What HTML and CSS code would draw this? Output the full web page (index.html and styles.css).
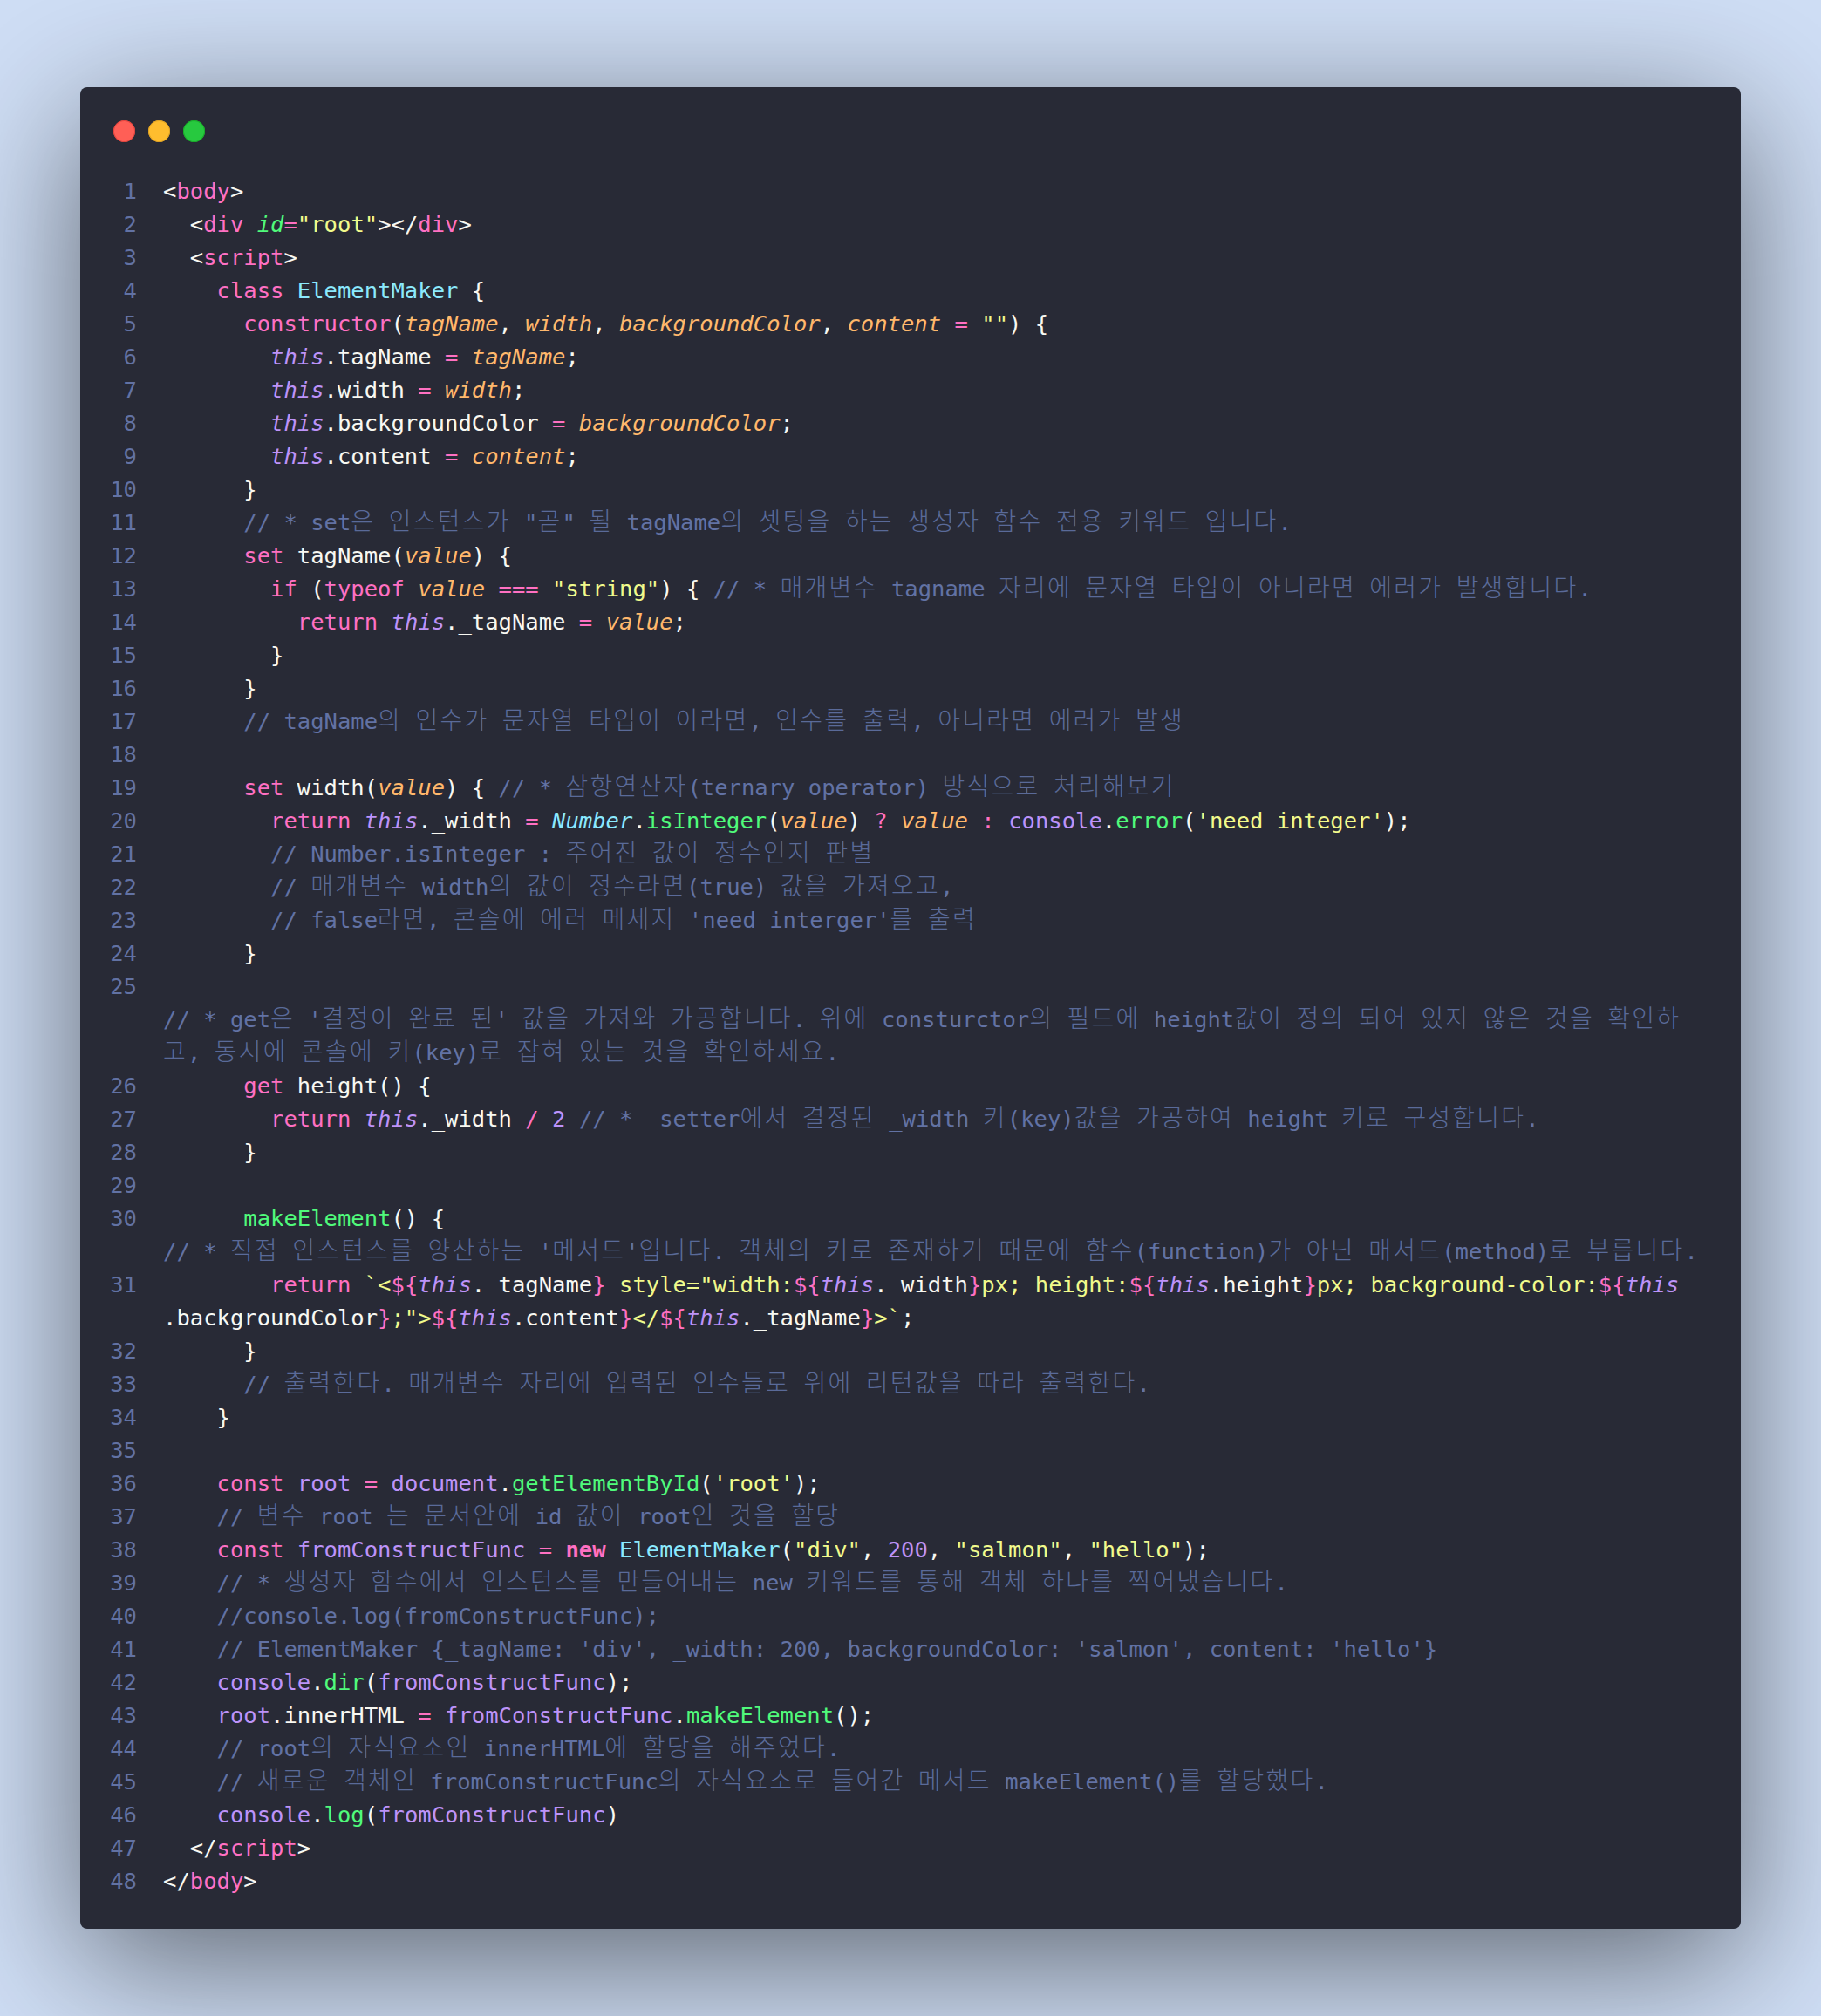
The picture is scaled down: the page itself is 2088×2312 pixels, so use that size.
FILE: index.html
```html
<!DOCTYPE html>
<html lang="ko">
<head>
<meta charset="utf-8">
<title>ElementMaker</title>
<link rel="stylesheet" href="styles.css">
</head>
<body>
<main class="window">
<div class="dots"><span class="dot red"></span><span class="dot yellow"></span><span class="dot green"></span></div>
<div class="lines">
<div class="ln"><span class="no">1</span><code class="code">&lt;<b class="k">body</b>&gt;</code></div>
<div class="ln"><span class="no">2</span><code class="code">  &lt;<b class="k">div</b> <i class="f">id</i><b class="k">=</b><b class="s">"root"</b>&gt;&lt;/<b class="k">div</b>&gt;</code></div>
<div class="ln"><span class="no">3</span><code class="code">  &lt;<b class="k">script</b>&gt;</code></div>
<div class="ln"><span class="no">4</span><code class="code">    <b class="k">class</b> <b class="t">ElementMaker</b> {</code></div>
<div class="ln"><span class="no">5</span><code class="code">      <b class="k">constructor</b>(<i class="v">tagName</i>, <i class="v">width</i>, <i class="v">backgroundColor</i>, <i class="v">content</i> <b class="k">=</b> <b class="s">""</b>) {</code></div>
<div class="ln"><span class="no">6</span><code class="code">        <i class="p">this</i>.tagName <b class="k">=</b> <i class="v">tagName</i>;</code></div>
<div class="ln"><span class="no">7</span><code class="code">        <i class="p">this</i>.width <b class="k">=</b> <i class="v">width</i>;</code></div>
<div class="ln"><span class="no">8</span><code class="code">        <i class="p">this</i>.backgroundColor <b class="k">=</b> <i class="v">backgroundColor</i>;</code></div>
<div class="ln"><span class="no">9</span><code class="code">        <i class="p">this</i>.content <b class="k">=</b> <i class="v">content</i>;</code></div>
<div class="ln"><span class="no">10</span><code class="code">      }</code></div>
<div class="ln"><span class="no">11</span><code class="code">      <b class="c">// * set<u>은</u> <u>인스턴스가</u> "<u>곧</u>" <u>될</u> tagName<u>의</u> <u>셋팅을</u> <u>하는</u> <u>생성자</u> <u>함수</u> <u>전용</u> <u>키워드</u> <u>입니다</u>.</b></code></div>
<div class="ln"><span class="no">12</span><code class="code">      <b class="k">set</b> tagName(<i class="v">value</i>) {</code></div>
<div class="ln"><span class="no">13</span><code class="code">        <b class="k">if</b> (<b class="k">typeof</b> <i class="v">value</i> <b class="k">===</b> <b class="s">"string"</b>) { <b class="c">// * <u>매개변수</u> tagname <u>자리에</u> <u>문자열</u> <u>타입이</u> <u>아니라면</u> <u>에러가</u> <u>발생합니다</u>.</b></code></div>
<div class="ln"><span class="no">14</span><code class="code">          <b class="k">return</b> <i class="p">this</i>._tagName <b class="k">=</b> <i class="v">value</i>;</code></div>
<div class="ln"><span class="no">15</span><code class="code">        }</code></div>
<div class="ln"><span class="no">16</span><code class="code">      }</code></div>
<div class="ln"><span class="no">17</span><code class="code">      <b class="c">// tagName<u>의</u> <u>인수가</u> <u>문자열</u> <u>타입이</u> <u>이라면</u>, <u>인수를</u> <u>출력</u>, <u>아니라면</u> <u>에러가</u> <u>발생</u></b></code></div>
<div class="ln"><span class="no">18</span><code class="code"> </code></div>
<div class="ln"><span class="no">19</span><code class="code">      <b class="k">set</b> width(<i class="v">value</i>) { <b class="c">// * <u>삼항연산자</u>(ternary operator) <u>방식으로</u> <u>처리해보기</u></b></code></div>
<div class="ln"><span class="no">20</span><code class="code">        <b class="k">return</b> <i class="p">this</i>._width <b class="k">=</b> <i class="t">Number</i>.<b class="f">isInteger</b>(<i class="v">value</i>) <b class="k">?</b> <i class="v">value</i> <b class="k">:</b> <b class="p">console</b>.<b class="f">error</b>(<b class="s">'need integer'</b>);</code></div>
<div class="ln"><span class="no">21</span><code class="code">        <b class="c">// Number.isInteger : <u>주어진</u> <u>값이</u> <u>정수인지</u> <u>판별</u></b></code></div>
<div class="ln"><span class="no">22</span><code class="code">        <b class="c">// <u>매개변수</u> width<u>의</u> <u>값이</u> <u>정수라면</u>(true) <u>값을</u> <u>가져오고</u>,</b></code></div>
<div class="ln"><span class="no">23</span><code class="code">        <b class="c">// false<u>라면</u>, <u>콘솔에</u> <u>에러</u> <u>메세지</u> 'need interger'<u>를</u> <u>출력</u></b></code></div>
<div class="ln"><span class="no">24</span><code class="code">      }</code></div>
<div class="ln"><span class="no">25</span><code class="code"> <br><b class="c">// * get<u>은</u> '<u>결정이</u> <u>완료</u> <u>된</u>' <u>값을</u> <u>가져와</u> <u>가공합니다</u>. <u>위에</u> consturctor<u>의</u> <u>필드에</u> height<u>값이</u> <u>정의</u> <u>되어</u> <u>있지</u> <u>않은</u> <u>것을</u> <u>확인하</u><br><u>고</u>, <u>동시에</u> <u>콘솔에</u> <u>키</u>(key)<u>로</u> <u>잡혀</u> <u>있는</u> <u>것을</u> <u>확인하세요</u>.</b></code></div>
<div class="ln"><span class="no">26</span><code class="code">      <b class="k">get</b> height() {</code></div>
<div class="ln"><span class="no">27</span><code class="code">        <b class="k">return</b> <i class="p">this</i>._width <b class="k">/</b> <b class="p">2</b> <b class="c">// *  setter<u>에서</u> <u>결정된</u> _width <u>키</u>(key)<u>값을</u> <u>가공하여</u> height <u>키로</u> <u>구성합니다</u>.</b></code></div>
<div class="ln"><span class="no">28</span><code class="code">      }</code></div>
<div class="ln"><span class="no">29</span><code class="code"> </code></div>
<div class="ln"><span class="no">30</span><code class="code">      <b class="f">makeElement</b>() {<br><b class="c">// * <u>직접</u> <u>인스턴스를</u> <u>양산하는</u> '<u>메서드</u>'<u>입니다</u>. <u>객체의</u> <u>키로</u> <u>존재하기</u> <u>때문에</u> <u>함수</u>(function)<u>가</u> <u>아닌</u> <u>매서드</u>(method)<u>로</u> <u>부릅니다</u>.</b></code></div>
<div class="ln"><span class="no">31</span><code class="code">        <b class="k">return</b> <b class="s">`&lt;</b><b class="k">${</b><i class="p">this</i>._tagName<b class="k">}</b><b class="s"> style="width:</b><b class="k">${</b><i class="p">this</i>._width<b class="k">}</b><b class="s">px; height:</b><b class="k">${</b><i class="p">this</i>.height<b class="k">}</b><b class="s">px; background-color:</b><b class="k">${</b><i class="p">this</i><br>.backgroundColor<b class="k">}</b><b class="s">;"&gt;</b><b class="k">${</b><i class="p">this</i>.content<b class="k">}</b><b class="s">&lt;/</b><b class="k">${</b><i class="p">this</i>._tagName<b class="k">}</b><b class="s">&gt;`</b>;</code></div>
<div class="ln"><span class="no">32</span><code class="code">      }</code></div>
<div class="ln"><span class="no">33</span><code class="code">      <b class="c">// <u>출력한다</u>. <u>매개변수</u> <u>자리에</u> <u>입력된</u> <u>인수들로</u> <u>위에</u> <u>리턴값을</u> <u>따라</u> <u>출력한다</u>.</b></code></div>
<div class="ln"><span class="no">34</span><code class="code">    }</code></div>
<div class="ln"><span class="no">35</span><code class="code"> </code></div>
<div class="ln"><span class="no">36</span><code class="code">    <b class="k">const</b> <b class="p">root</b> <b class="k">=</b> <b class="p">document</b>.<b class="f">getElementById</b>(<b class="s">'root'</b>);</code></div>
<div class="ln"><span class="no">37</span><code class="code">    <b class="c">// <u>변수</u> root <u>는</u> <u>문서안에</u> id <u>값이</u> root<u>인</u> <u>것을</u> <u>할당</u></b></code></div>
<div class="ln"><span class="no">38</span><code class="code">    <b class="k">const</b> <b class="p">fromConstructFunc</b> <b class="k">=</b> <strong class="k">new</strong> <b class="t">ElementMaker</b>(<b class="s">"div"</b>, <b class="p">200</b>, <b class="s">"salmon"</b>, <b class="s">"hello"</b>);</code></div>
<div class="ln"><span class="no">39</span><code class="code">    <b class="c">// * <u>생성자</u> <u>함수에서</u> <u>인스턴스를</u> <u>만들어내는</u> new <u>키워드를</u> <u>통해</u> <u>객체</u> <u>하나를</u> <u>찍어냈습니다</u>.</b></code></div>
<div class="ln"><span class="no">40</span><code class="code">    <b class="c">//console.log(fromConstructFunc);</b></code></div>
<div class="ln"><span class="no">41</span><code class="code">    <b class="c">// ElementMaker {_tagName: 'div', _width: 200, backgroundColor: 'salmon', content: 'hello'}</b></code></div>
<div class="ln"><span class="no">42</span><code class="code">    <b class="p">console</b>.<b class="f">dir</b>(<b class="p">fromConstructFunc</b>);</code></div>
<div class="ln"><span class="no">43</span><code class="code">    <b class="p">root</b>.innerHTML <b class="k">=</b> <b class="p">fromConstructFunc</b>.<b class="f">makeElement</b>();</code></div>
<div class="ln"><span class="no">44</span><code class="code">    <b class="c">// root<u>의</u> <u>자식요소인</u> innerHTML<u>에</u> <u>할당을</u> <u>해주었다</u>.</b></code></div>
<div class="ln"><span class="no">45</span><code class="code">    <b class="c">// <u>새로운</u> <u>객체인</u> fromConstructFunc<u>의</u> <u>자식요소로</u> <u>들어간</u> <u>메서드</u> makeElement()<u>를</u> <u>할당했다</u>.</b></code></div>
<div class="ln"><span class="no">46</span><code class="code">    <b class="p">console</b>.<b class="f">log</b>(<b class="p">fromConstructFunc</b>)</code></div>
<div class="ln"><span class="no">47</span><code class="code">  &lt;/<b class="k">script</b>&gt;</code></div>
<div class="ln"><span class="no">48</span><code class="code">&lt;/<b class="k">body</b>&gt;</code></div>
</div>
</main>
</body>
</html>
```
FILE: styles.css
```css
html, body { margin: 0; padding: 0; }
body {
  width: 2088px;
  height: 2312px;
  box-sizing: border-box;
  padding: 100px 92px;
  background: #cfdef5;
  overflow: hidden;
}
.window {
  height: 2112px;
  box-sizing: border-box;
  padding: 38px 0 0 38px;
  background: #282a36;
  border-radius: 8px;
  box-shadow: 0 38px 160px rgba(0, 0, 0, 0.55);
}
.dots { display: flex; gap: 15px; height: 25px; margin-bottom: 37px; }
.dot { width: 25px; height: 25px; border-radius: 50%; }
.red { background: #ff5f56; box-shadow: inset 0 0 0 1px #e0443e; }
.yellow { background: #ffbd2e; box-shadow: inset 0 0 0 1px #dea123; }
.green { background: #27c93f; box-shadow: inset 0 0 0 1px #1aab29; }
.lines { margin-left: -38px; }
.ln {
  display: flex;
  gap: 30px;
  font: 25.55px/38px "DejaVu Sans Mono", "Noto Sans CJK KR", monospace;
  color: #f8f8f2;
}
.no { width: 65px; text-align: right; color: #6272a4; flex: none; }
.code { font: inherit; white-space: pre; }
b, strong, i { font-weight: 400; }
i { font-style: italic; }
strong { font-weight: 700; }
u {
  font-family: "Noto Sans CJK KR", sans-serif;
  font-size: 28px;
  font-weight: 200;
  line-height: 1;
  letter-spacing: 2.22px;
  text-decoration: none;
  color: #5a6a99;
}
.k { color: #ff70c2; }
.t { color: #8be9fd; }
.v { color: #ffb86c; }
.s { color: #f1fa8c; }
.c { color: #6272a4; }
.p { color: #bd93f9; }
.f { color: #50fa7b; }
```
